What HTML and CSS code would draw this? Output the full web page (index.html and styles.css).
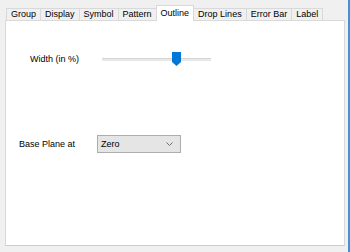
FILE: index.html
```html
<!DOCTYPE html>
<html lang="en">
<head>
  <meta charset="UTF-8">
  <meta name="viewport" content="width=device-width, initial-scale=1.0">
  <title>Plot Details - Outline</title>
  <link rel="stylesheet" href="styles.css">
</head>
<body>
  <div class="window">
    <div class="tabs">
      <div class="tab">Group</div>
      <div class="tab">Display</div>
      <div class="tab">Symbol</div>
      <div class="tab">Pattern</div>
      <div class="tab active">Outline</div>
      <div class="tab">Drop Lines</div>
      <div class="tab">Error Bar</div>
      <div class="tab">Label</div>
    </div>

    <div class="panel">
      <div class="row width-row">
        <span class="label width-label">Width (in %)</span>
        <div class="slider">
          <div class="track"></div>
          <svg class="thumb" width="9" height="14" viewBox="0 0 9 14">
            <path d="M0 0 H9 V10 L4.5 14 L0 10 Z" fill="#0078d7"/>
          </svg>
        </div>
      </div>

      <div class="row base-row">
        <span class="label base-label">Base Plane at</span>
        <div class="combo">
          <span class="combo-text">Zero</span>
          <svg class="chevron" width="7" height="4" viewBox="0 0 7 4">
            <path d="M0.5 0.5 L3.5 3.5 L6.5 0.5" fill="none" stroke="#707070" stroke-width="1"/>
          </svg>
        </div>
      </div>
    </div>
  </div>
</body>
</html>
```

FILE: styles.css
```css
html,
body {
  margin: 0;
  padding: 0;
}

body {
  width: 350px;
  height: 252px;
  background-color: #f0f0f0;
  font-family: "Liberation Sans", Arial, sans-serif;
  font-size: 9px;
  color: #000;
  overflow: hidden;
}

.window {
  box-sizing: border-box;
  width: 350px;
  height: 252px;
  padding: 5px 0 0 5px;
  border-right: 2px solid #4a8fd6;
}

.tabs {
  display: flex;
  align-items: flex-end;
  height: 15px;
  padding-left: 1px;
}

.tab {
  box-sizing: border-box;
  height: 12px;
  line-height: 11px;
  padding: 0 4px;
  margin-right: -1px;
  border: 1px solid #d9d9d9;
  border-bottom: none;
  background-color: #f0f0f0;
  white-space: nowrap;
}

.tab.active {
  position: relative;
  z-index: 1;
  height: 16px;
  line-height: 15px;
  margin-bottom: -1px;
  background-color: #fff;
}

.panel {
  box-sizing: border-box;
  width: 340px;
  height: 226px;
  padding-top: 31px;
  background-color: #fff;
  border: 1px solid #d9d9d9;
  border-bottom-color: #cccccc;
}

.row {
  display: flex;
  align-items: center;
}

.width-row {
  padding-left: 24px;
  height: 14px;
}

.width-label {
  width: 72px;
}

.slider {
  position: relative;
  width: 109px;
  height: 14px;
  display: flex;
  align-items: center;
}

.track {
  width: 100%;
  height: 3px;
  background-color: #e7e7e7;
  border-top: 1px solid #d6d6d6;
  box-sizing: border-box;
}

.thumb {
  position: absolute;
  left: 70px;
  top: 0;
}

.base-row {
  margin-top: 69px;
  padding-left: 13px;
}

.base-label {
  width: 78px;
}

.combo {
  box-sizing: border-box;
  width: 84px;
  height: 18px;
  display: flex;
  align-items: center;
  justify-content: space-between;
  padding: 0 7px 0 3px;
  background-color: #e5e5e5;
  border: 1px solid #adadad;
}
```
